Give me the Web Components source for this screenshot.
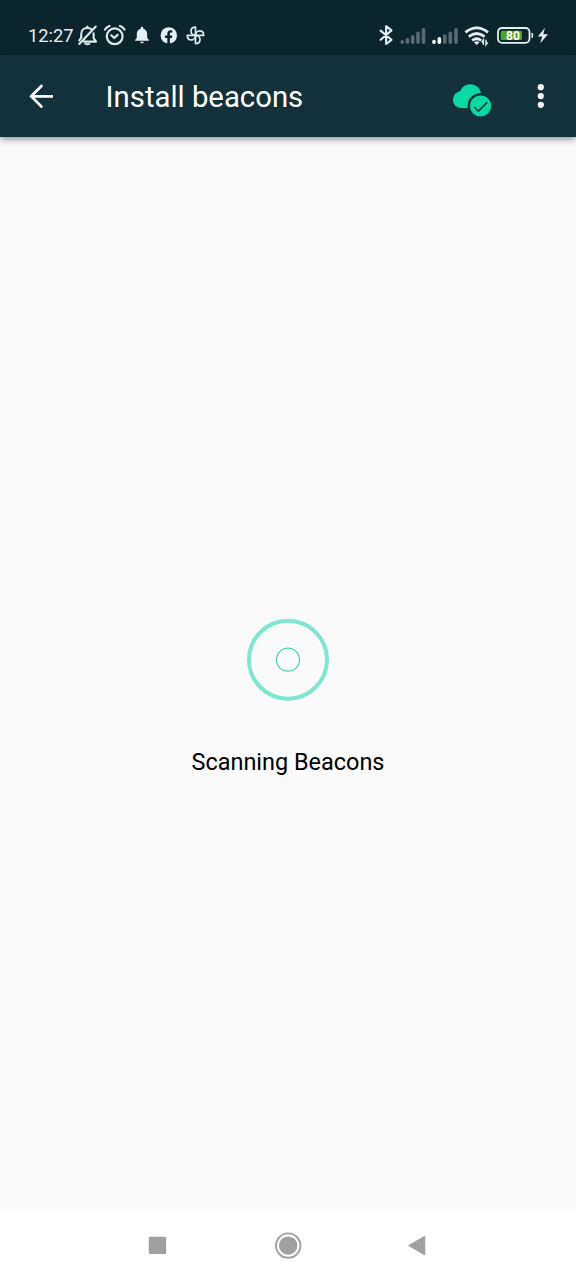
<!DOCTYPE html>
<html lang="en">
<head>
<meta charset="utf-8">
<title>Install beacons</title>
<style>
html,body{margin:0;height:100%}
body{font-family:Roboto,"Liberation Sans",sans-serif;background:#fafafa}
</style>
</head>
<body>
<beacon-app></beacon-app>

<template id="t-status">
<style>
:host{display:flex;height:55px;background:#0c252d;color:#e6eef1;box-sizing:border-box;padding-left:28px;flex:none}
svg{display:block;height:55px;flex:none}
.clock{width:49px;font-size:18.300px;box-sizing:border-box;height:55px;line-height:38px;padding-top:17px;white-space:nowrap}
.right{margin-left:auto;display:flex;padding-right:26px}
.bat{width:36px;height:55px;display:grid}
.bat>*{grid-area:1/1}
.bat span{font-size:12px;font-weight:700;color:#fff;line-height:15px;margin-top:28.600px;width:34px;text-align:center}
</style>
<span class="clock">12:27</span>
<svg width="24" viewBox="77 0 24 55" fill="none" stroke="#dfe9ec" stroke-width="2.100" stroke-linecap="round" stroke-linejoin="round"><path d="M79.3 44L95.8 26.5M81.2 38V34.5C81.2 30.7 83.6 28 87.4 28C89.5 28 90.9 28.5 92 29.7M93.6 33.2V38.2L96 41.6H84M81.2 37.5L79.2 40.5M87.4 26.5V28"/><path d="M84.8 43.8h5.4q-2.7 2.4-5.4 0z" fill="#dfe9ec" stroke-width="1"/></svg>
<svg width="29" viewBox="101 0 29 55" fill="none" stroke="#dfe9ec" stroke-width="2.200" stroke-linecap="round" stroke-linejoin="round"><circle cx="114.7" cy="36.3" r="7.9"/><path d="M111.300 35.300L114.300 38L117.700 34.800M105 29.5Q106.500 27 109.5 26M120 26Q123 27 124.500 29.500"/></svg>
<svg width="25" viewBox="130 0 25 55" fill="#e6f0f6"><path d="M142 26.800a1.300 1.300 0 0 1 1.300 1.300v.7c2.600.6 3.900 2.700 3.900 5.300v4l1.700 1.800v.9h-13.800v-.9l1.700-1.800v-4c0-2.600 1.300-4.700 3.900-5.300v-.7a1.300 1.300 0 0 1 1.300-1.300zM140.200 41.700h3.600a1.800 1.500 0 0 1-3.600 0z"/></svg>
<svg width="27" viewBox="155 0 27 55"><circle cx="168.800" cy="35.400" r="8.200" fill="#e6f0f6"/><path d="M167.300 44V38.100h-2.300v-2.500h2.300v-1.700c0-2.500 1.400-3.600 3.400-3.600.8 0 1.600.1 1.600.1v2.200h-1.100c-1.100 0-1.300.6-1.300 1.400v1.600h2.400l-.4 2.500h-2V44z" fill="#0c252d"/></svg>
<svg width="28" viewBox="182 0 28 55" fill="none" stroke="#dfe9ec" stroke-width="1.700" stroke-linejoin="round"><path d="M195.500 35.400V27.200C192.800 27.200 191 29 191 31.300C191 33.500 192.800 35.400 195.500 35.400z"/><path d="M195.500 35.400V27.200C192.800 27.200 191 29 191 31.300C191 33.500 192.800 35.400 195.500 35.400z" transform="rotate(90 195.500 35.400)"/><path d="M195.500 35.400V27.200C192.800 27.200 191 29 191 31.300C191 33.500 192.800 35.400 195.500 35.400z" transform="rotate(180 195.500 35.400)"/><path d="M195.500 35.400V27.200C192.800 27.200 191 29 191 31.300C191 33.500 192.800 35.400 195.500 35.400z" transform="rotate(270 195.500 35.400)"/></svg>
<div class="right">
<svg width="22" viewBox="375 0 22 55" fill="none" stroke="#e6eef1" stroke-width="2.100" stroke-linejoin="round" stroke-linecap="round"><path d="M380.600 30.600L391.500 39.800L386.100 44V26.200L391.500 30.400L380.600 39.800"/></svg>
<svg width="32" viewBox="397 0 32 55" stroke="#59696f" stroke-width="3.600" stroke-linecap="round"><path d="M402.200 41.900v.3M407.400 39.900v2.300M412.700 36.900v5.300M418 33.400v8.800M423.500 29.800v12.400"/></svg>
<svg width="33" viewBox="429 0 33 55" stroke="#59696f" stroke-width="3.600" stroke-linecap="round"><path d="M434 41.500v.7M439.300 38.900v3.300" stroke="#fff"/><path d="M444.800 36v6.200M450.300 33.400v8.800M456 29.800v12.400"/></svg>
<svg width="34" viewBox="462 0 34 55" fill="none" stroke="#e6eef1" stroke-width="2.800"><path d="M465.400 32.400Q476.700 23.400 488 32.400M468.800 36.700Q476.700 30.300 484.600 36.700M472.200 40.500Q476.700 37 481.200 40.500"/><path d="M473.900 42.300Q476.700 40.200 479.500 42.300L476.700 45z" fill="#e6eef1" stroke="none"/><path d="M483.400 45v-5l-1.700 2.500M486 39.800v5l1.700-2.500" stroke-width="1.400"/></svg>
<div class="bat"><svg width="40" viewBox="496 0 40 55"><rect x="498" y="28" width="31.500" height="14.800" rx="4" fill="none" stroke="#e6eef1" stroke-width="1.800"/><rect x="500.700" y="30.700" width="21.300" height="9.400" rx="1.500" fill="#4ca51b"/><path d="M532 33q1.700 2.400 0 4.800z" fill="#e6eef1" stroke="#e6eef1"/></svg><span>80</span></div>
<svg width="18" viewBox="532 0 18 55" fill="#e6eef1"><path d="M545 27.800L537.800 36.600H542.200L540.300 43.300L548 34.200H543.300z"/></svg>
</div>
</template>

<template id="t-bar">
<style>
:host{display:flex;align-items:center;height:82px;background:#12313a;color:#fff;flex:none;box-shadow:0 2px 7px rgba(0,0,0,.45);z-index:1}
svg{display:block;flex:none}
h1{font-size:29.300px;font-weight:400;line-height:40px;margin:1px auto 0 -.4px;white-space:nowrap}
</style>
<svg width="106" height="82" viewBox="0 55 106 82" fill="none" stroke="#fff" stroke-width="2.700"><path d="M53 96.300H31.500M42.200 85.200L31.200 96.300L42.200 107.400"/></svg>
<h1><slot></slot></h1>
<svg width="56" height="82" viewBox="446 55 56 82"><g fill="#06d9a2"><circle cx="461.300" cy="99.700" r="8.400"/><circle cx="470.300" cy="95" r="10.800"/><path d="M461.300 108.100V96H480V108.100z"/></g><circle cx="480.600" cy="106" r="13" fill="#12313a"/><circle cx="480.600" cy="106" r="10.600" fill="#06d9a2"/><path d="M474.200 107L478.400 111.200L487.200 102.200" fill="none" stroke="#12313a" stroke-width="1.600"/></svg>
<svg width="74" height="82" viewBox="502 55 74 82" fill="#fff"><circle cx="540.800" cy="87.200" r="3.100"/><circle cx="540.800" cy="96.100" r="3.100"/><circle cx="540.800" cy="104.800" r="3.100"/></svg>
</template>

<template id="t-scan">
<style>
:host{flex:1;display:flex;flex-direction:column;align-items:center;background:#fafafa;padding-top:477px;box-sizing:border-box}
svg{display:block;flex:none}
p{margin:40px 0 0;font-size:23.450px;line-height:32px;color:#000;white-space:nowrap}
</style>
<svg width="92" height="92" viewBox="242 614 92 92" fill="none"><circle cx="288" cy="659.700" r="39" stroke="#7de8d1" stroke-width="4"/><circle cx="288" cy="659.700" r="11.500" stroke="#3fcfae" stroke-width="1.200"/></svg>
<p><slot></slot></p>
</template>

<template id="t-nav">
<style>
:host{display:flex;justify-content:center;height:69px;background:#fff;flex:none}
svg{display:block;width:130px;height:69px;flex:none}
</style>
<svg viewBox="93 1211 130 69"><rect x="148.800" y="1236.700" width="17.300" height="17.300" rx="1" fill="#a0a0a0"/></svg>
<svg viewBox="223 1211 130 69"><circle cx="288.200" cy="1245.600" r="12.200" fill="none" stroke="#a0a0a0" stroke-width="1.900"/><circle cx="288.200" cy="1245.600" r="9.200" fill="#a0a0a0"/></svg>
<svg viewBox="353 1211 130 69"><path d="M408.700 1245.600L424.800 1236.300V1254.900z" fill="#a0a0a0" stroke="#a0a0a0" stroke-linejoin="round"/></svg>
</template>

<script>
function define(name, id) {
  customElements.define(name, class extends HTMLElement {
    constructor() {
      super();
      this.attachShadow({ mode: 'open' }).append(document.getElementById(id).content.cloneNode(true));
    }
  });
}
define('status-bar', 't-status');
define('app-bar', 't-bar');
define('scan-view', 't-scan');
define('nav-bar', 't-nav');
customElements.define('beacon-app', class extends HTMLElement {
  constructor() {
    super();
    this.attachShadow({ mode: 'open' }).innerHTML = `
      <style>:host{display:flex;flex-direction:column;height:1280px;width:576px;overflow:hidden}</style>
      <status-bar></status-bar>
      <app-bar>Install beacons</app-bar>
      <scan-view>Scanning Beacons</scan-view>
      <nav-bar></nav-bar>`;
  }
});
</script>
</body>
</html>
